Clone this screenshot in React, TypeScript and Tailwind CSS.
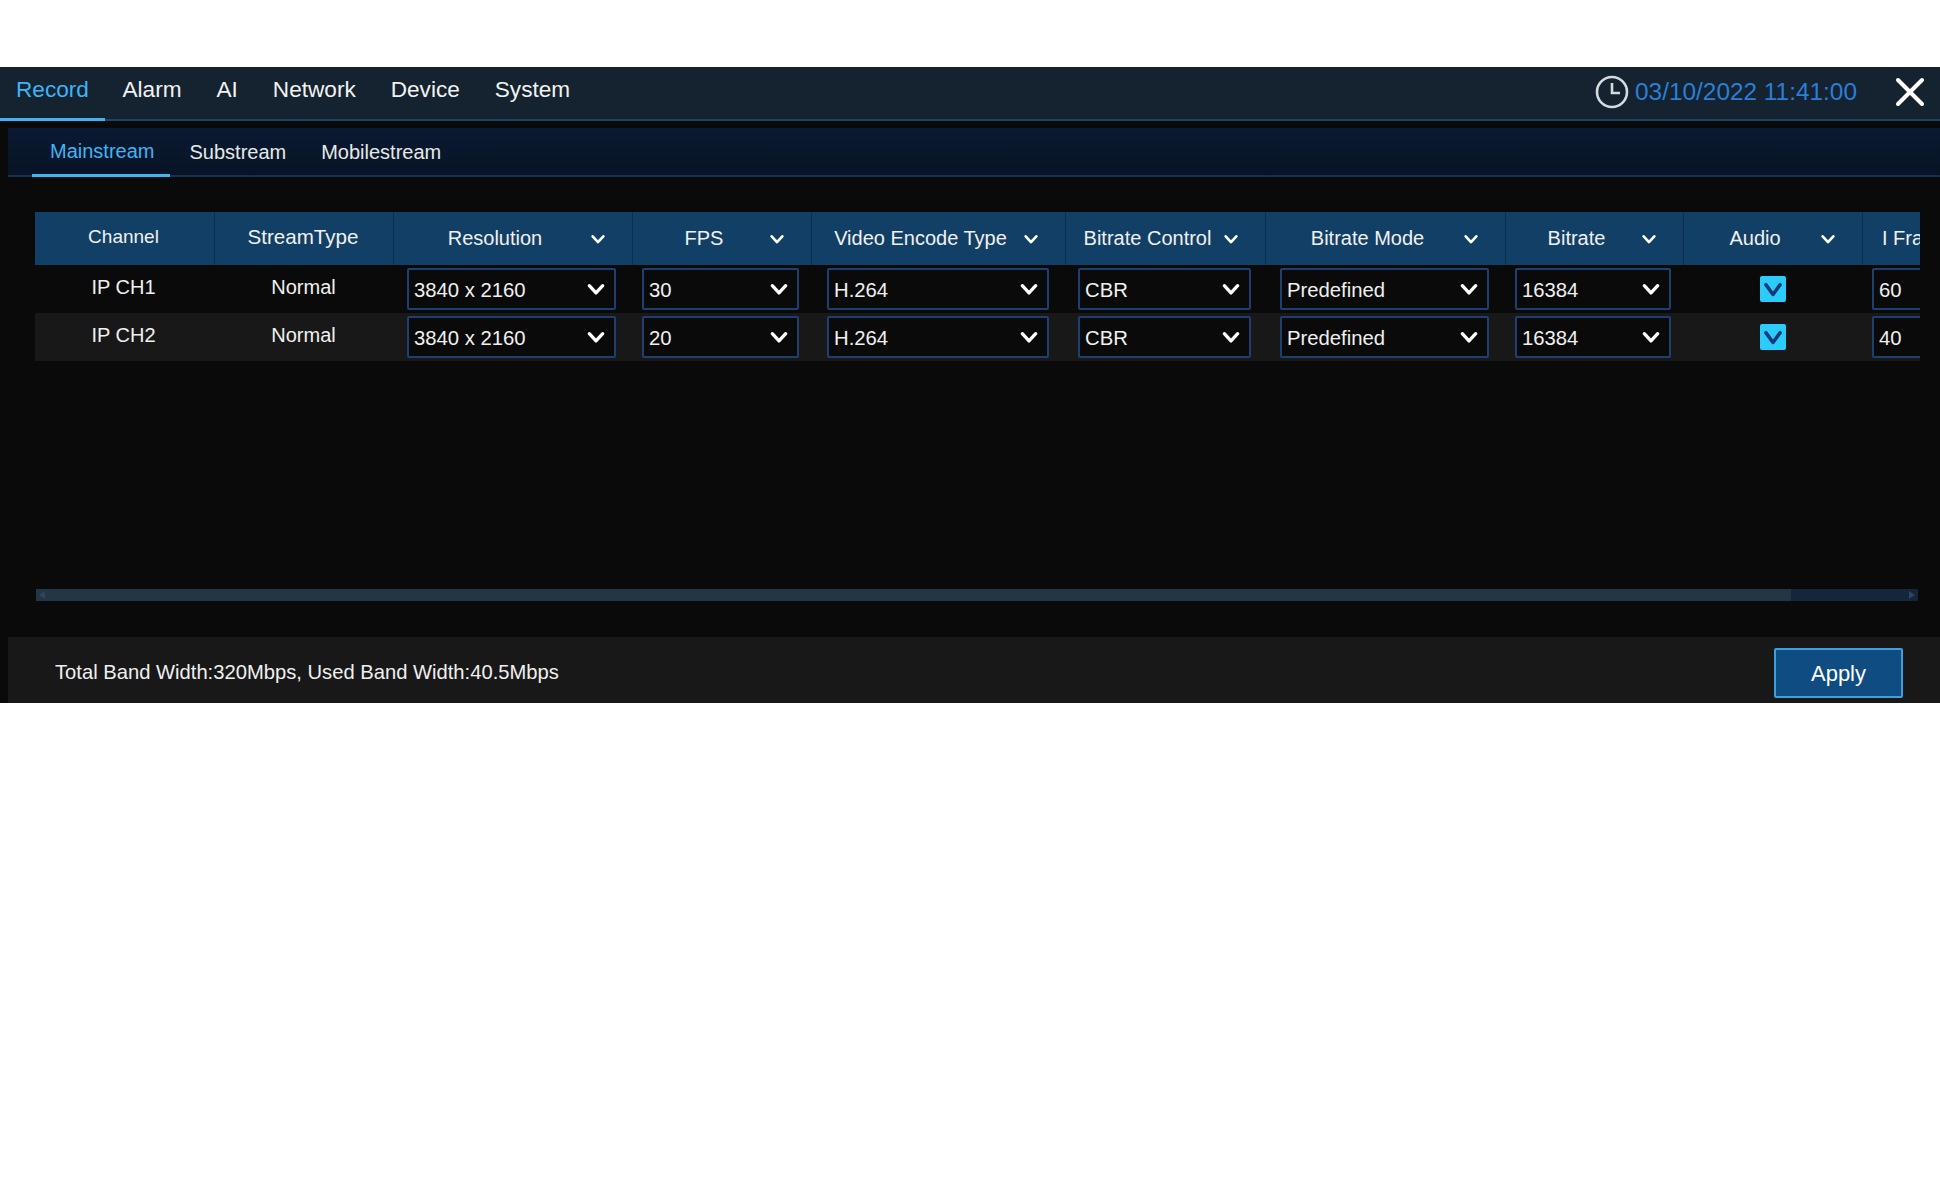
import React from 'react';

const Chevron = ({ size = 18 }: { size?: number }) => (
  <svg width={size} height={size} viewBox="0 0 18 18" fill="none" stroke="white" strokeWidth="3" strokeLinecap="round" strokeLinejoin="round" className="shrink-0">
    <path d="M3 6 L9 12.5 L15 6" />
  </svg>
);

const mainTabs = ['Record', 'Alarm', 'AI', 'Network', 'Device', 'System'];

const Select = ({ value, className }: { value: string; className: string }) => (
  <div className={`h-[42px] flex items-center justify-between pl-[5px] pr-[8px] border-2 border-[#1e4070] rounded-[2px] bg-[#0a0a0a] text-[20.3px] text-[#f0f0f0] ${className}`}>
    <span className="pt-0.5">{value}</span>
    <Chevron size={20} />
  </div>
);

const Checkbox = () => (
  <div className="w-[26px] h-[26px] bg-[#2accfb] rounded-[2px] flex items-center justify-center">
    <svg width="22" height="22" viewBox="0 0 20 20" fill="none" stroke="#123a78" strokeWidth="3.2" strokeLinecap="round" strokeLinejoin="round">
      <path d="M3.5 6 L10 15 L16.5 6" />
    </svg>
  </div>
);

const HeadCell = ({ label }: { label: string }) => (
  <div className="h-full flex items-center border-r border-[#0d2f4d] pr-[26px]">
    <span className="flex-1 pl-[6px] pb-[2px] text-center whitespace-nowrap">{label}</span>
    <Chevron size={16} />
  </div>
);

const PlainCell = ({ label, className = '' }: { label: string; className?: string }) => (
  <div className={`h-full flex items-center justify-center pb-[2px] pr-[2px] border-r border-[#0d2f4d] whitespace-nowrap ${className}`}>{label}</div>
);

const cols = 'grid grid-cols-[180px_179px_239px_179px_254px_200px_240px_178px_179px_120px]';

const rows = [
  { ch: 'IP CH1', fps: '30', iframe: '60', bg: 'bg-[#0a0a0a]' },
  { ch: 'IP CH2', fps: '20', iframe: '40', bg: 'bg-[#181818]' },
];

export default function App() {
  return (
    <div className="min-h-screen bg-white pt-[67px] font-['Liberation_Sans',Arial,sans-serif]">
      <div className="h-[636px] bg-[#0a0a0a] flex flex-col">
        {/* top menu */}
        <div className="h-[54px] shrink-0 bg-[#14232f] border-b-2 border-[#1c4463] flex items-start justify-between text-[22.6px] text-[#f2f2f2]">
          <div className="flex h-[54px]">
            {mainTabs.map((tab, i) => (
              <div
                key={tab}
                className={
                  i === 0
                    ? 'h-[54px] px-4 w-[105px] pt-[6px] text-[#3fb4f5] border-b-[3px] border-[#3fb4f5]'
                    : 'h-[54px] px-[17.5px] pt-[6px]'
                }
              >
                {tab}
              </div>
            ))}
          </div>
          <div className="flex items-center h-[50px] pr-[15px]">
            <svg width="34" height="34" viewBox="0 0 34 34" fill="none" stroke="#d4dade" strokeWidth="2.6" className="mr-[6px]">
              <circle cx="17" cy="17" r="15" />
              <path d="M17 8 V18 H25" />
            </svg>
            <span className="text-[24.4px] text-[#2a7fd8] mr-[38px]">03/10/2022 11:41:00</span>
            <svg width="30" height="30" viewBox="0 0 30 30" stroke="white" strokeWidth="4" strokeLinecap="round">
              <path d="M3 3 L27 27 M27 3 L3 27" />
            </svg>
          </div>
        </div>

        <div className="flex-1 flex flex-col pl-[8px] min-h-0">
          {/* stream tabs */}
          <div className="h-[49px] mt-[7px] shrink-0 bg-gradient-to-b from-[#0a1a33] to-[#081425] border-b-2 border-[#13324f] flex pl-[24px] text-[20px] text-[#e8e8e8]">
            <div className="h-[49px] pl-[18px] pr-[16px] flex items-center text-[#3fb4f5] border-b-[3px] border-[#3fb4f5]">Mainstream</div>
            <div className="h-[47px] pl-[19px] pr-[17px] flex items-center">Substream</div>
            <div className="h-[47px] px-[18px] flex items-center">Mobilestream</div>
          </div>

          {/* table */}
          <div className="ml-[27px] mr-[20px] mt-[35px] overflow-hidden text-[20px] text-[#f0f0f0]">
            <div className="w-[2000px]">
              <div className={`${cols} h-[53px] bg-[#123f66]`}>
                <PlainCell label="Channel" className="text-[19px]" />
                <PlainCell label="StreamType" className="text-[20.6px]" />
                <HeadCell label="Resolution" />
                <HeadCell label="FPS" />
                <HeadCell label="Video Encode Type" />
                <HeadCell label="Bitrate Control" />
                <HeadCell label="Bitrate Mode" />
                <HeadCell label="Bitrate" />
                <HeadCell label="Audio" />
                <div className="h-full flex items-center pl-[19px] pb-[2px] whitespace-nowrap">I Frame</div>
              </div>
              {rows.map((row) => (
                <div key={row.ch} className={`${cols} h-[48px] items-center ${row.bg}`}>
                  <div className="text-center pb-1 pr-[3px]">{row.ch}</div>
                  <div className="text-center pb-1 pr-[2px]">Normal</div>
                  <Select value="3840 x 2160" className="ml-[13px] w-[209px]" />
                  <Select value={row.fps} className="ml-[9px] w-[157px]" />
                  <Select value="H.264" className="ml-[15px] w-[222px]" />
                  <Select value="CBR" className="ml-[12px] w-[173px]" />
                  <Select value="Predefined" className="ml-[14px] w-[209px]" />
                  <Select value="16384" className="ml-[9px] w-[156px]" />
                  <div className="flex justify-center pr-[2px]"><Checkbox /></div>
                  <Select value={row.iframe} className="ml-[9px] w-[100px]" />
                </div>
              ))}
            </div>
          </div>

          {/* horizontal scrollbar */}
          <div className="ml-[28px] mr-[22px] mt-[228px] h-[12px] bg-[#13263a] flex items-center relative">
            <div className="w-[1755px] h-full bg-[#233645]" />
            <div className="absolute left-[3px] w-0 h-0 border-y-[4px] border-y-transparent border-r-[6px] border-r-[#2c4560]" />
            <div className="absolute right-[3px] w-0 h-0 border-y-[4px] border-y-transparent border-l-[6px] border-l-[#2c4560]" />
          </div>

          {/* footer */}
          <div className="mt-auto h-[66px] shrink-0 bg-[#181818] flex items-center justify-between pt-[4px] pl-[47px] pr-[37px] text-[20.2px] text-[#f0f0f0]">
            <span>Total Band Width:320Mbps, Used Band Width:40.5Mbps</span>
            <button className="w-[129px] h-[50px] mt-[2px] bg-[#0f4c81] border-2 border-[#3f9fdc] rounded-[2px] text-[22px] text-white">Apply</button>
          </div>
        </div>
      </div>
    </div>
  );
}
